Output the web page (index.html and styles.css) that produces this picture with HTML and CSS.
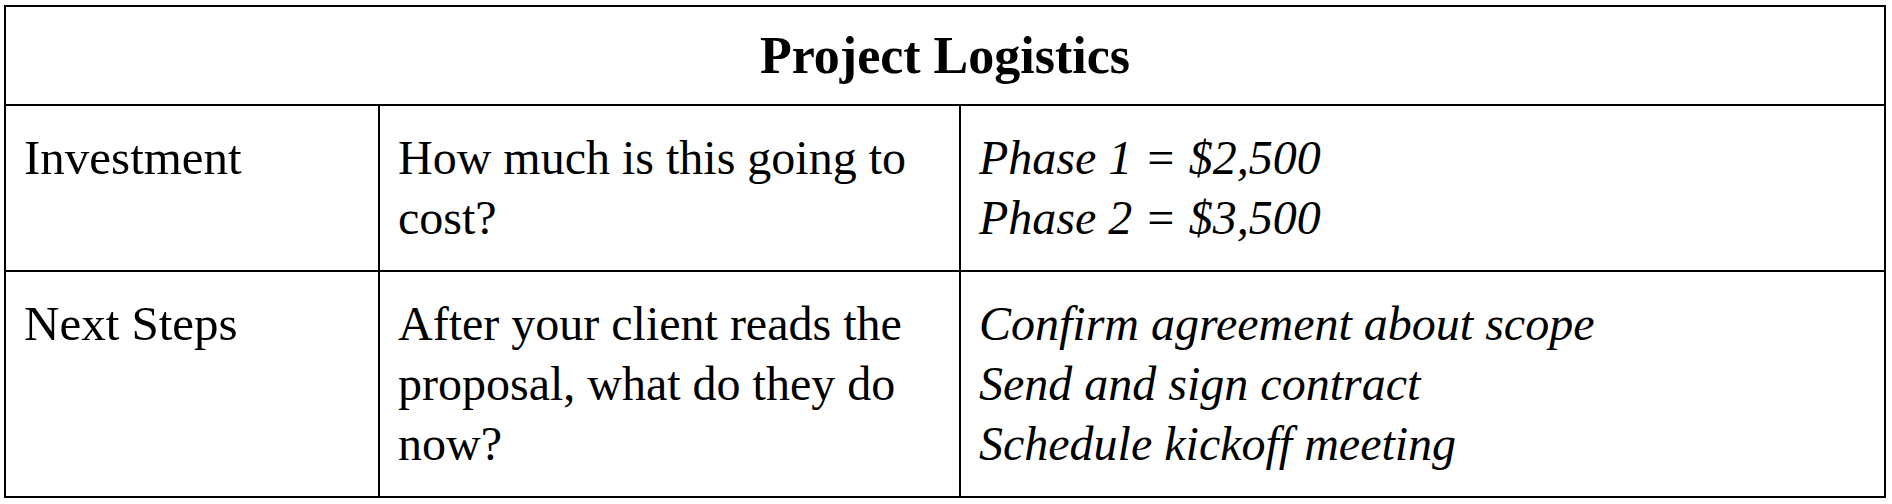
FILE: index.html
```html
<!DOCTYPE html>
<html lang="en">
<head>
<meta charset="utf-8">
<title>Project Logistics</title>
<link rel="stylesheet" href="styles.css">
</head>
<body>
<table class="logistics">
  <colgroup>
    <col class="c-label">
    <col class="c-question">
    <col class="c-answer">
  </colgroup>
  <thead>
    <tr>
      <th colspan="3" class="title">Project Logistics</th>
    </tr>
  </thead>
  <tbody>
    <tr>
      <td class="label">Investment</td>
      <td class="question">How much is this going to cost?</td>
      <td class="answer">
        <div class="line">Phase 1 = $2,500</div>
        <div class="line">Phase 2 = $3,500</div>
      </td>
    </tr>
    <tr>
      <td class="label">Next Steps</td>
      <td class="question">After your client reads the proposal, what do they do now?</td>
      <td class="answer">
        <div class="line">Confirm agreement about scope</div>
        <div class="line">Send and sign contract</div>
        <div class="line">Schedule kickoff meeting</div>
      </td>
    </tr>
  </tbody>
</table>
</body>
</html>
```
FILE: styles.css
```css
html, body {
  margin: 0;
  padding: 0;
  background: #ffffff;
}

body {
  font-family: "Liberation Serif", "Times New Roman", serif;
  color: #000000;
}

.logistics {
  margin: 5px 0 0 4px;
  width: 1882px;
  border-collapse: collapse;
  table-layout: fixed;
}

.c-label { width: 374px; }
.c-question { width: 581px; }
.c-answer { width: 925px; }

.logistics th,
.logistics td {
  border: 2px solid #000000;
  vertical-align: top;
  text-align: left;
  font-size: 48px;
  line-height: 60px;
  padding: 22px 18px 22px 18px;
}

.logistics td.label {
  font-size: 49px;
}

.logistics th.title {
  text-align: center;
  font-weight: bold;
  font-size: 52px;
  padding: 19px 18px 18px 18px;
}

.answer {
  font-style: italic;
}

.answer .line {
  white-space: nowrap;
}
```
